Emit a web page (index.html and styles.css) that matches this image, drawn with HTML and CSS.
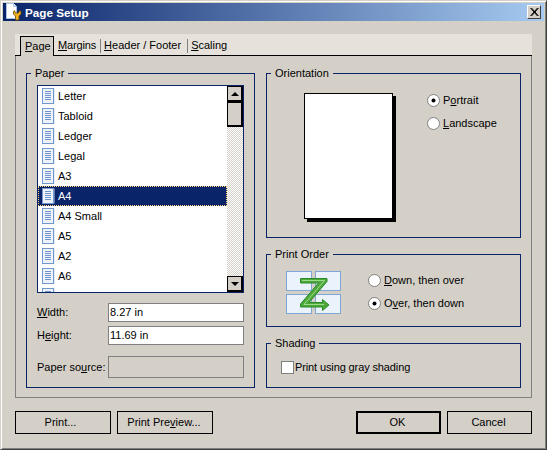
FILE: index.html
```html
<!DOCTYPE html>
<html>
<head>
<meta charset="utf-8">
<title>Page Setup</title>
<link rel="stylesheet" href="styles.css">
</head>
<body>
<svg class="defs" width="0" height="0">
  <symbol id="doc" viewBox="0 0 13 17">
    <rect x="1.500" y="0.500" width="11" height="15" fill="#c9d8ee"/>
    <rect x="0.500" y="0.500" width="11" height="15" fill="#eef3fb" stroke="#7197cf"/>
    <path d="M3 3.500h6M3 5.500h6M3 7.500h6M3 9.500h6M3 11.500h6" stroke="#6d94cc" fill="none"/>
  </symbol>
  <symbol id="radio" viewBox="0 0 13 13">
    <circle cx="6.500" cy="6.500" r="6" fill="#fff" stroke="#808080"/>
  </symbol>
  <symbol id="radio-on" viewBox="0 0 13 13">
    <circle cx="6.500" cy="6.500" r="6" fill="#fff" stroke="#808080"/>
    <circle cx="6.500" cy="6.500" r="2" fill="#000"/>
  </symbol>
</svg>
<div class="window">
  <div class="titlebar">
    <svg class="title-icon" width="18" height="18" viewBox="0 0 18 18">
      <path d="M1.500 0.500h7l3 3v12h-10z" fill="#fff" stroke="#a9c4e8"/>
      <path d="M8.500 0.500v3h3" fill="#dbe6f4" stroke="#a9c4e8"/>
      <path d="M9.500 7.500l1 2.500h3l1-2.500 1.500 1v2.500l-2 2v4h-3.500v-4l-2-2v-2.500z" fill="#f2b01e" stroke="#6b4a08" stroke-width="0.800"/>
    </svg>
    <span class="title-text">Page Setup</span>
    <span class="close">
      <svg width="9" height="8" viewBox="0 0 9 8"><path d="M0.500 0l7 8M1.500 0l7 8M7.500 0l-7 8M8.500 0l-7 8" stroke="#000" fill="none"/></svg>
    </span>
  </div>

  <div class="tabs">
    <div class="tab tab-active"><u>P</u>age</div>
    <div class="tab tab-margins"><u>M</u>argins</div>
    <div class="tab tab-sep tab-header"><u>H</u>eader / Footer</div>
    <div class="tab tab-sep"><u>S</u>caling</div>
  </div>

  <div class="panel">
    <section class="group group-paper">
      <span class="legend">Paper</span>
      <div class="list">
        <div class="rows">
          <div class="row"><svg class="doc"><use href="#doc"/></svg>Letter</div>
          <div class="row"><svg class="doc"><use href="#doc"/></svg>Tabloid</div>
          <div class="row"><svg class="doc"><use href="#doc"/></svg>Ledger</div>
          <div class="row"><svg class="doc"><use href="#doc"/></svg>Legal</div>
          <div class="row"><svg class="doc"><use href="#doc"/></svg>A3</div>
          <div class="row row-selected"><svg class="doc"><use href="#doc"/></svg>A4</div>
          <div class="row"><svg class="doc"><use href="#doc"/></svg>A4 Small</div>
          <div class="row"><svg class="doc"><use href="#doc"/></svg>A5</div>
          <div class="row"><svg class="doc"><use href="#doc"/></svg>A2</div>
          <div class="row"><svg class="doc"><use href="#doc"/></svg>A6</div>
          <div class="row"><svg class="doc"><use href="#doc"/></svg>Letter Small</div>
        </div>
        <div class="scrollbar">
          <div class="sb-btn"><span class="arrow-up"></span></div>
          <div class="sb-thumb"></div>
          <div class="sb-track"></div>
          <div class="sb-btn"><span class="arrow-down"></span></div>
        </div>
      </div>
      <div class="fields">
        <label class="field-label"><u>W</u>idth:</label>
        <div class="input">8.27 in</div>
        <label class="field-label">H<u>e</u>ight:</label>
        <div class="input">11.69 in</div>
        <label class="field-label field-source">Paper so<u>u</u>rce:</label>
        <div class="input input-disabled"></div>
      </div>
    </section>

    <div class="right">
      <section class="group group-orient">
        <span class="legend">Orientation</span>
        <div class="page-preview"></div>
        <div class="radios radios-orient">
          <div class="radio"><svg class="radio-mark"><use href="#radio-on"/></svg><span>P<u>o</u>rtrait</span></div>
          <div class="radio"><svg class="radio-mark"><use href="#radio"/></svg><span><u>L</u>andscape</span></div>
        </div>
      </section>

      <section class="group group-order">
        <span class="legend">Print Order</span>
        <svg class="order-icon" width="56" height="44" viewBox="0 0 56 44">
          <g fill="#eaf2fc" stroke="#7fa6d6">
            <rect x="0.500" y="0.500" width="25" height="19"/>
            <rect x="29.500" y="0.500" width="25" height="19"/>
            <rect x="0.500" y="23.500" width="25" height="19"/>
            <rect x="29.500" y="23.500" width="25" height="19"/>
          </g>
          <path d="M14.500 7.500H41V10.500L23 31.500H36.500V28.500L43 34L36.500 39.500V36H14.500V33L32.500 12H14.500Z" fill="#4ea83c" stroke="#2a8a2a"/>
          <path d="M16 9.500H38.500L18 33.500H38" fill="none" stroke="#9bdc86"/>
        </svg>
        <div class="radios radios-order">
          <div class="radio"><svg class="radio-mark"><use href="#radio"/></svg><span><u>D</u>own, then over</span></div>
          <div class="radio"><svg class="radio-mark"><use href="#radio-on"/></svg><span>O<u>v</u>er, then down</span></div>
        </div>
      </section>

      <section class="group group-shading">
        <span class="legend">Shading</span>
        <div class="check"><span class="checkbox"></span><span class="check-label">Print using gray shading</span></div>
      </section>
    </div>
  </div>

  <div class="buttons">
    <div class="btn btn-print">Print...</div>
    <div class="btn">Print Pre<u>v</u>iew...</div>
    <div class="btn btn-ok">OK</div>
    <div class="btn btn-cancel">Cancel</div>
  </div>
</div>
</body>
</html>
```
FILE: styles.css
```css
* { box-sizing: border-box; }
html, body { margin: 0; padding: 0; }
body { width: 547px; height: 450px; overflow: hidden; }
.defs { position: absolute; }
.window {
  width: 547px;
  height: 450px;
  background: #d4d0c8;
  color: #000;
  font: 11px/13px "Liberation Sans", Arial, sans-serif;
  border-top: 1px solid #d4d0c8;
  border-left: 1px solid #d4d0c8;
  border-right: 1px solid #404040;
  border-bottom: 1px solid #404040;
  box-shadow: inset 1px 1px 0 #fff, inset -1px -1px 0 #808080;
  padding: 2px 2px 0 2px;
}
.titlebar {
  height: 18px;
  display: flex;
  align-items: center;
  padding: 0 3px 0 2px;
  background: linear-gradient(90deg, #0a246a, #a6caf0);
  color: #fff;
  font-weight: bold;
  font-size: 11.7px;
}
.title-icon { flex: none; }
.title-text { margin-left: 2px; }
.close {
  margin-left: auto;
  width: 14px;
  height: 14px;
  background: #d4d0c8;
  border: 1px solid;
  border-color: #fff #404040 #404040 #fff;
  display: flex;
  align-items: center;
  justify-content: center;
}
.tabs {
  margin: 13px 12px 0 12px;
  height: 22px;
  background: #e6e2db;
  border-bottom: 1px solid #000;
  display: flex;
  padding: 2px 0 0 5px;
  align-items: flex-end;
}
.tab {
  height: 19px;
  line-height: 18px;
  padding: 0 5px;
}
.tab-active {
  width: 34px;
  height: 20px;
  margin-bottom: -1px;
  background: #d4d0c8;
  border: 1px solid #000;
  border-bottom: 0;
  padding: 0 4px;
}
.tab-margins { padding: 0 4px 0 4px; letter-spacing: -0.15px; }
.tab-sep {
  border-left: 1px solid #808080;
  height: 14px;
  line-height: 13px;
  margin-bottom: 2px;
  padding: 0 5px 0 3px;
}
.tab-header { padding-right: 6px; }
.panel {
  margin: 0 12px;
  height: 342px;
  padding: 17px 0 0 10px;
  border: 1px solid #808080;
  border-top: 0;
  display: grid;
  grid-template-columns: 229px 255px;
  column-gap: 11px;
  align-items: start;
}
.group {
  position: relative;
  border: 1px solid #0a246a;
}
.legend {
  position: absolute;
  left: 4px;
  top: -7px;
  padding: 0 4px;
  background: #d4d0c8;
}
.group-paper { height: 315px; padding: 11px 10px 0 10px; }
.list {
  width: 207px;
  height: 208px;
  border: 1px solid #0a246a;
  background: #fff;
  display: flex;
  overflow: hidden;
}
.rows { width: 189px; flex: none; height: 206px; overflow: hidden; }
.row {
  height: 20px;
  display: flex;
  align-items: center;
  padding: 0 0 0 4px;
  gap: 3px;
}
.doc { width: 13px; height: 17px; flex: none; }
.row-selected {
  background: #0a246a;
  color: #fff;
  outline: 1px dotted #ffd27a;
  outline-offset: -1px;
}
.scrollbar {
  width: 16px;
  flex: none;
  display: flex;
  flex-direction: column;
}
.sb-btn, .sb-thumb {
  background: #d4d0c8;
  border: 1px solid #000;
  border-right-width: 2px;
  border-bottom-width: 2px;
  flex: none;
}
.sb-btn { height: 16px; display: flex; align-items: center; justify-content: center; }
.sb-thumb { height: 25px; }
.sb-track {
  flex: 1;
  background: conic-gradient(#d4d0c8 25%, #fff 0 50%, #d4d0c8 0 75%, #fff 0) 0 0 / 2px 2px;
}
.arrow-up, .arrow-down {
  width: 0;
  height: 0;
  border-left: 4px solid transparent;
  border-right: 4px solid transparent;
}
.arrow-up { border-bottom: 4px solid #000; }
.arrow-down { border-top: 4px solid #000; }
.fields {
  margin-top: 10px;
  display: grid;
  grid-template-columns: 71px 136px;
  grid-template-rows: 19px 19px 29px;
  row-gap: 4px;
  align-items: center;
}
.field-source { align-self: end; line-height: 22px; }
.input {
  height: 100%;
  border: 1px solid #808080;
  background: #fff;
  padding: 0 0 0 1px;
  line-height: 17px;
}
.input-disabled { background: #d4d0c8; height: 22px; align-self: end; }
.right { display: flex; flex-direction: column; gap: 16px; }
.group-orient { height: 165px; display: flex; padding: 19px 0 0 37px; }
.page-preview {
  width: 89px;
  height: 126px;
  background: #fff;
  border: 1px solid #000;
  box-shadow: 3px 3px 0 #000;
  flex: none;
}
.radios { display: flex; flex-direction: column; gap: 10px; }
.radios-orient { margin-left: 34px; margin-top: 1px; }
.radio { display: flex; align-items: center; gap: 3px; height: 13px; }
.radio-mark { width: 13px; height: 13px; flex: none; }
.group-order { height: 73px; display: flex; padding: 16px 0 0 19px; }
.order-icon { flex: none; }
.radios-order { margin-left: 26px; margin-top: 3px; }
.group-shading { height: 45px; padding: 17px 0 0 14px; }
.check { display: flex; align-items: center; gap: 1px; height: 13px; }
.check-label { letter-spacing: -0.12px; }
.checkbox { width: 13px; height: 13px; background: #fff; border: 1px solid #808080; flex: none; }
.buttons {
  margin: 13px 12px 0 12px;
  display: flex;
  gap: 6px;
}
.btn {
  width: 96px;
  height: 23px;
  border: 1px solid #000;
  text-align: center;
  line-height: 21px;
  padding-right: 2px;
}
.btn-print { padding-right: 5px; }
.btn-ok { width: 85px; border-width: 2px; line-height: 19px; margin-left: auto; }
.btn-cancel { width: 85px; }
```
